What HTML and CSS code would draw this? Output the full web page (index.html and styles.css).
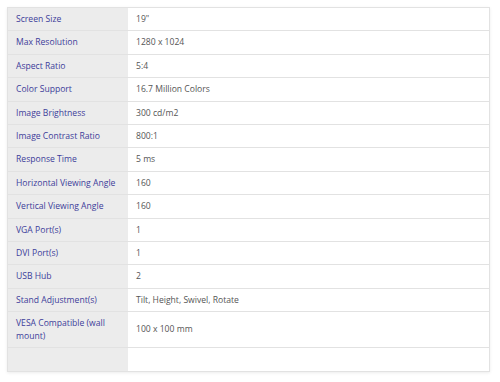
FILE: index.html
```html
<!DOCTYPE html>
<html lang="en">
<head>
  <meta charset="UTF-8">
  <meta name="viewport" content="width=device-width, initial-scale=1.0">
  <title>Monitor Specifications</title>
  <link rel="stylesheet" href="styles.css">
</head>
<body>
  <div class="spec-wrap">
    <table class="spec-table">
      <tr><th>Screen Size</th><td>19"</td></tr>
      <tr><th>Max Resolution</th><td>1280 x 1024</td></tr>
      <tr><th>Aspect Ratio</th><td>5:4</td></tr>
      <tr><th>Color Support</th><td>16.7 Million Colors</td></tr>
      <tr><th>Image Brightness</th><td>300 cd/m2</td></tr>
      <tr><th>Image Contrast Ratio</th><td>800:1</td></tr>
      <tr><th>Response Time</th><td>5 ms</td></tr>
      <tr><th>Horizontal Viewing Angle</th><td>160</td></tr>
      <tr><th>Vertical Viewing Angle</th><td>160</td></tr>
      <tr><th>VGA Port(s)</th><td>1</td></tr>
      <tr><th>DVI Port(s)</th><td>1</td></tr>
      <tr><th>USB Hub</th><td>2</td></tr>
      <tr><th>Stand Adjustment(s)</th><td>Tilt, Height, Swivel, Rotate</td></tr>
      <tr><th>VESA Compatible (wall mount)</th><td>100 x 100 mm</td></tr>
      <tr class="empty-row"><th>&nbsp;</th><td>&nbsp;</td></tr>
    </table>
  </div>
</body>
</html>
```

FILE: styles.css
```css
body {
  margin: 0;
  padding: 7px 10px 10px 7px;
  font-family: "Open Sans", Arial, sans-serif;
  background-color: #fff;
}

.spec-wrap {
  width: 483px;
  box-shadow: 0 1px 3px rgba(0, 0, 0, 0.08);
}

.spec-table {
  width: 100%;
  table-layout: fixed;
  border-collapse: collapse;
  border: 1px solid #e2e2e2;
  font-size: 8.6px;
}

.spec-table th,
.spec-table td {
  padding: 5px 8px;
  line-height: 12.4px;
  border-bottom: 1px solid #e2e2e2;
  text-align: left;
  vertical-align: middle;
}

.spec-table th {
  width: 104px;
  background-color: #ececec;
  color: #3c3c9a;
  font-weight: normal;
}

.spec-table td {
  color: #555;
  background-color: #fff;
}
```
